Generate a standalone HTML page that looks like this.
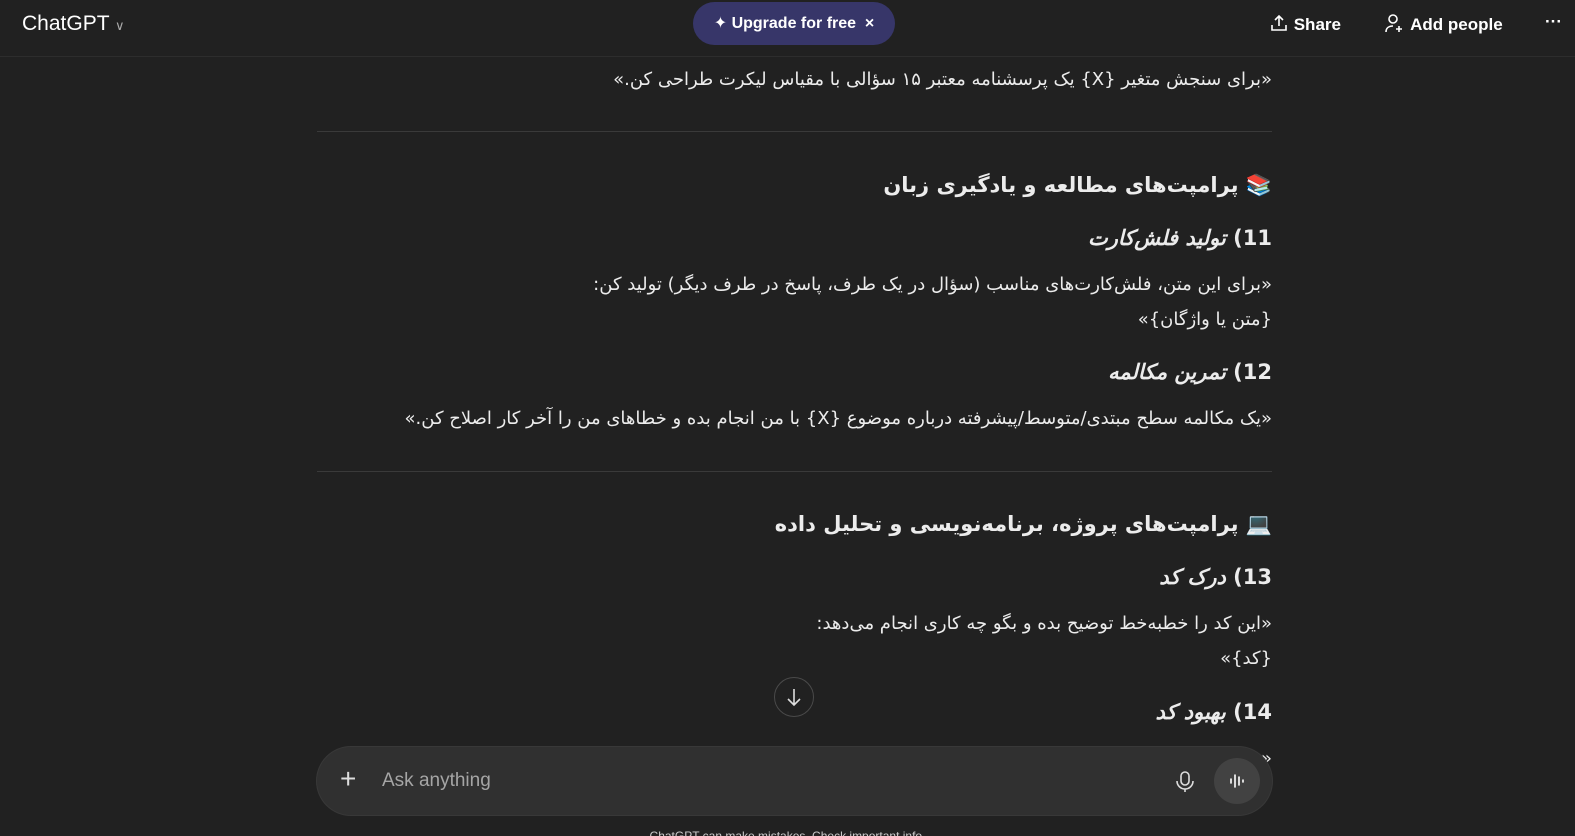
<!DOCTYPE html>
<html><head><meta charset="utf-8"><style>
html,body{overflow:hidden}
body{margin:0;width:1575px;height:836px;background:#212121;color:#ececec;font-family:"Liberation Sans","DejaVu Sans",sans-serif;position:relative}
.l{position:absolute;right:303px;direction:rtl;white-space:nowrap;font-family:"DejaVu Sans","Liberation Sans",sans-serif}
.b{font-size:18px;color:#ececec}
.h3{font-size:21px;font-weight:bold}
.h4{font-size:21px;font-weight:bold}
.h4 i{font-style:italic}
hr{position:absolute;left:317px;width:955px;margin:0;border:0;border-top:1px solid #3a3a3a}
.top{position:absolute;font-size:17px;color:#fff}
</style></head><body>
<div style="position:absolute;left:0;top:56px;width:1575px;height:1px;background:#2d2d2d"></div>
<div class="top" style="left:22px;top:12px;font-size:21px">ChatGPT <span style="font-size:13px;color:#aaa">&#8744;</span></div>
<div style="position:absolute;left:693px;top:2px;width:202px;height:43px;border-radius:22px;background:#373669;color:#fff;font-size:16px;font-weight:bold;line-height:43px;text-align:center">✦ Upgrade for free &nbsp;×</div>
<div class="top" style="left:1269px;top:13px;font-weight:bold">
<svg width="20" height="20" viewBox="0 0 20 20" style="vertical-align:-3px" fill="none" stroke="#fff" stroke-width="1.6"><path d="M10 13V3M6 7l4-4 4 4M3 12v5h14v-5"/></svg> Share</div>
<div class="top" style="left:1384px;top:13px;font-weight:bold">
<svg width="22" height="20" viewBox="0 0 22 20" style="vertical-align:-3px" fill="none" stroke="#fff" stroke-width="1.6"><circle cx="9" cy="6" r="4"/><path d="M2 19c0-4 3-6 7-6M15 13v6M12 16h6"/></svg> Add people</div>
<div class="top" style="left:1545px;top:12px;font-weight:bold">···</div>

<div class="l b" style="top:69px">«برای سنجش متغیر {X} یک پرسشنامه معتبر ۱۵ سؤالی با مقیاس لیکرت طراحی کن.»</div>
<hr style="top:131px">
<div class="l h3" style="top:173px">📚 پرامپت‌های مطالعه و یادگیری زبان</div>
<div class="l h4" style="top:226px">11) <i>تولید فلش‌کارت</i></div>
<div class="l b" style="top:274px">«برای این متن، فلش‌کارت‌های مناسب (سؤال در یک طرف، پاسخ در طرف دیگر) تولید کن:</div>
<div class="l b" style="top:309px">{متن یا واژگان}»</div>
<div class="l h4" style="top:360px">12) <i>تمرین مکالمه</i></div>
<div class="l b" style="top:408px">«یک مکالمه سطح مبتدی/متوسط/پیشرفته درباره موضوع {X} با من انجام بده و خطاهای من را آخر کار اصلاح کن.»</div>
<hr style="top:471px">
<div class="l h3" style="top:512px">💻 پرامپت‌های پروژه، برنامه‌نویسی و تحلیل داده</div>
<div class="l h4" style="top:565px">13) <i>درک کد</i></div>
<div class="l b" style="top:613px">«این کد را خطبه‌خط توضیح بده و بگو چه کاری انجام می‌دهد:</div>
<div class="l b" style="top:648px">{کد}»</div>
<div class="l h4" style="top:700px">14) <i>بهبود کد</i></div>
<div class="l b" style="top:748px">«</div>

<div style="position:absolute;left:774px;top:677px;width:38px;height:38px;border:1px solid #4a4a4a;border-radius:50%;background:#212121">
<svg width="38" height="38" viewBox="0 0 38 38" fill="none" stroke="#ddd" stroke-width="1.6"><path d="M19 11v16M13 21l6 6 6-6"/></svg></div>

<div style="position:absolute;left:317px;top:747px;width:955px;height:68px;border-radius:34px;background:#303030;box-shadow:0 0 0 1px #383838">
<div style="position:absolute;left:23px;top:16px;font-size:28px;font-weight:300;color:#ddd">+</div>
<div style="position:absolute;left:65px;top:23px;font-size:19px;color:#a5a5a5">Ask anything</div>
<svg style="position:absolute;left:858px;top:24px" width="20" height="22" viewBox="0 0 20 22" fill="none" stroke="#ddd" stroke-width="1.6"><rect x="6" y="1" width="8" height="13" rx="4"/><path d="M2 10a8 8 0 0016 0M10 18v3"/></svg>
<div style="position:absolute;left:897px;top:11px;width:46px;height:46px;border-radius:50%;background:#424242">
<svg width="46" height="46" viewBox="0 0 46 46" stroke="#fff" stroke-width="1.6" stroke-linecap="round"><path d="M17 21v4M21 17v12M25 19v8M29 22v2"/></svg></div>
</div>
<div style="position:absolute;left:0;width:1575px;top:829px;text-align:center;font-size:12px;color:#ccc">ChatGPT can make mistakes. Check important info.</div>
</body></html>
